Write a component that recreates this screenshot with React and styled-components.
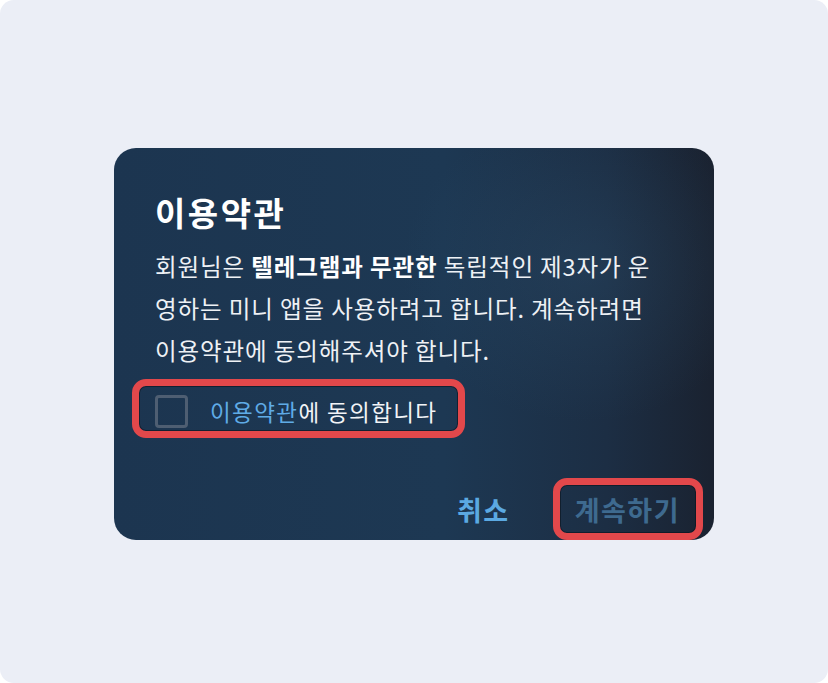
import React from "react";
import styled, { createGlobalStyle } from "styled-components";

const Global = createGlobalStyle`
  html, body { margin: 0; padding: 0; background: #ffffff; }
  body { font-family: "Noto Sans CJK KR", "Noto Sans", sans-serif; }
  * { box-sizing: border-box; }
`;

const Page = styled.div`
  width: 828px;
  height: 683px;
  background: #ebeef6;
  border-radius: 14px;
  display: flex;
  justify-content: center;
  padding-top: 148px;
`;

const Dialog = styled.div`
  width: 600px;
  height: 392px;
  border-radius: 22px;
  padding: 44px 17px 6px 41px;
  display: flex;
  flex-direction: column;
  color: #ffffff;
  background:
    radial-gradient(ellipse 260px 220px at 470px 120px, rgba(45, 80, 110, 0.35), rgba(45, 80, 110, 0) 70%),
    linear-gradient(90deg, #1c3550 0%, #1d3853 55%, #1c2e44 82%, #1a2230 100%);
`;

const Title = styled.h2`
  margin: 0;
  font-size: 33px;
  line-height: 40px;
  font-weight: 700;
  letter-spacing: 2.5px;
  color: #ffffff;
`;

const Body = styled.p`
  margin: 13px 0 0;
  font-size: 23.5px;
  line-height: 42px;
  letter-spacing: 0.9px;
  color: #eef1f5;
  white-space: nowrap;
  b { font-weight: 700; color: #ffffff; }
`;

const Ringed = styled.div`
  position: relative;
  &::after {
    content: "";
    position: absolute;
    inset: ${(p) => p.$inset};
    border: 7px solid #e2484b;
    border-radius: 14px;
    box-shadow: inset 0 0 0 1px rgba(10, 20, 30, 0.6);
    pointer-events: none;
  }
`;

const CheckRow = styled(Ringed)`
  margin-top: 24px;
  align-self: flex-start;
  display: flex;
  align-items: center;
  gap: 22px;
  height: 33px;
`;

const Box = styled.span`
  width: 33px;
  height: 33px;
  border: 3px solid #4e5e72;
  border-radius: 4px;
`;

const Label = styled.span`
  font-size: 22.5px;
  letter-spacing: 1.4px;
  color: #f2f4f7;
  line-height: 33px;
`;

const Link = styled.span`
  color: #5fabe6;
`;

const Footer = styled.div`
  margin-top: auto;
  display: flex;
  justify-content: flex-end;
  align-items: center;
  gap: 32px;
`;

const Button = styled.button`
  height: 50px;
  padding: 0 17px 0 16px;
  background: transparent;
  border: none;
  font-family: "Noto Sans CJK KR", "Noto Sans", sans-serif;
  font-size: 27px;
  font-weight: 700;
  letter-spacing: 1.5px;
  color: ${(p) => (p.$disabled ? "#3e6a8f" : "#5ba9e2")};
`;

const RingButton = styled(Ringed)``;

export default function App() {
  return (
    <>
      <Global />
      <Page>
        <Dialog>
          <Title>이용약관</Title>
          <Body>
            회원님은 <b>텔레그램과 무관한</b> 독립적인 제3자가 운<br />
            영하는 미니 앱을 사용하려고 합니다. 계속하려면<br />
            이용약관에 동의해주셔야 합니다.
          </Body>
          <CheckRow $inset="-16px -28px -10px -23px">
            <Box />
            <Label>
              <Link>이용약관</Link>에 동의합니다
            </Label>
          </CheckRow>
          <Footer>
            <Button>취소</Button>
            <RingButton $inset="-6px">
              <Button $disabled>계속하기</Button>
            </RingButton>
          </Footer>
        </Dialog>
      </Page>
    </>
  );
}
